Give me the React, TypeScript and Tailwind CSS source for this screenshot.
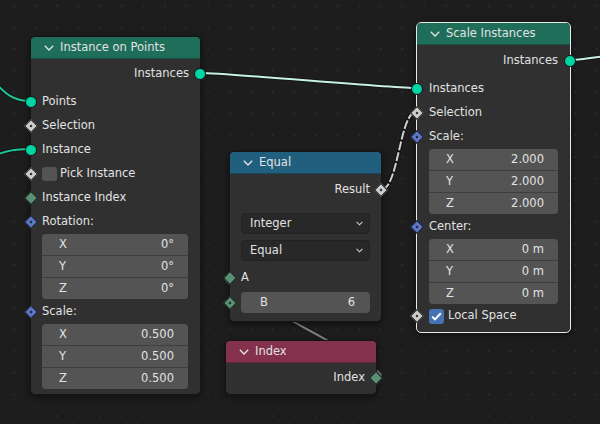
import type { ReactNode } from 'react'

type SocketKind = 'geo' | 'bool' | 'int' | 'intField' | 'vec'

function Socket({ kind, side }: { kind: SocketKind; side: 'left' | 'right' }) {
  const pos = side === 'left' ? '-left-[6px]' : '-right-[6px]'
  if (kind === 'geo') {
    return (
      <span
        className={`absolute ${pos} top-1/2 -translate-y-1/2 w-[12px] h-[12px] rounded-full bg-[#00d6a3] border border-[#141414]`}
      />
    )
  }
  const color =
    kind === 'bool' ? 'bg-[#cdcdcd]' : kind === 'vec' ? 'bg-[#5c77c8]' : 'bg-[#5a8f74]'
  const dot = kind === 'bool' || kind === 'vec' || kind === 'intField'
  return (
    <span
      className={`absolute ${pos} top-1/2 -translate-y-1/2 w-[12px] h-[12px] flex items-center justify-center`}
    >
      <span
        className={`shrink-0 w-[10px] h-[10px] rotate-45 ${color} border border-[#141414] flex items-center justify-center`}
      >
        {dot && <span className="w-[2.5px] h-[2.5px] bg-[#1e1e1e]" />}
      </span>
    </span>
  )
}

function Row({
  label,
  input,
  output,
  className = '',
  children,
}: {
  label?: string
  input?: SocketKind
  output?: SocketKind
  className?: string
  children?: ReactNode
}) {
  return (
    <div
      className={`relative h-[24px] flex items-center ${output ? 'justify-end' : ''} ${className}`}
    >
      {input && <Socket kind={input} side="left" />}
      {children}
      {label && <span>{label}</span>}
      {output && <Socket kind={output} side="right" />}
    </div>
  )
}

function Vec({ rows, className = '' }: { rows: [string, string][]; className?: string }) {
  return (
    <div className={`rounded-[4px] overflow-hidden flex flex-col gap-px bg-[#3e3e3e] ${className}`}>
      {rows.map(([k, v]) => (
        <div key={k} className="h-[21px] bg-[#545454] flex items-center justify-between pl-[17px] pr-[14px]">
          <span>{k}</span>
          <span>{v}</span>
        </div>
      ))}
    </div>
  )
}

function Chevron() {
  return (
    <svg width="10" height="6" viewBox="0 0 10 6" className="shrink-0">
      <polyline points="0.8,0.8 5,5 9.2,0.8" fill="none" stroke="#e6e6e6" strokeWidth="1.3" />
    </svg>
  )
}

function Header({ title, color }: { title: string; color: string }) {
  return (
    <div className={`h-[22px] ${color} rounded-t-[4px] flex items-center gap-[6px] pl-[13px] border-b border-[#00000040]`}>
      <Chevron />
      <span>{title}</span>
    </div>
  )
}

function Dropdown({ label, className = '' }: { label: string; className?: string }) {
  return (
    <div
      className={`mx-[11px] h-[21px] rounded-[4px] bg-[#282828] border border-[#232323] flex items-center justify-between pl-[8px] pr-[6px] ${className}`}
    >
      <span>{label}</span>
      <svg width="7" height="5" viewBox="0 0 7 5">
        <polyline points="0.6,0.8 3.5,3.8 6.4,0.8" fill="none" stroke="#d0d0d0" strokeWidth="1.1" />
      </svg>
    </div>
  )
}

function Wire({ d, color, dashed }: { d: string; color: string; dashed?: boolean }) {
  return (
    <g fill="none">
      <path d={d} stroke="#111111" strokeWidth="4" strokeOpacity="0.8" />
      <path d={d} stroke={color} strokeWidth="2" strokeDasharray={dashed ? '9 2' : undefined} />
    </g>
  )
}

export default function App() {
  return (
    <div className="relative w-[600px] h-[424px] overflow-hidden bg-[#1d1d1d] bg-[radial-gradient(circle,#2a2a2a_1px,transparent_1.3px)] bg-[size:21.6px_21.6px] bg-[position:3px_-5px] text-[11.5px] text-[#e2e2e2] font-['DejaVu_Sans',sans-serif] leading-none">
      {/* links, drawn under the nodes */}
      <svg className="absolute inset-0" width="600" height="424">
        <Wire d="M -40 68 C 0 68, -5 101, 30 101" color="#1ec59c" />
        <Wire d="M -40 160 C 0 160, -5 149, 30 149" color="#1ec59c" />
        <Wire d="M 377 377 C 412 377, 194 277, 229 277" color="#7c7c7c" />
        <Wire d="M 201 73 C 225 73, 392 88, 416 88" color="#c6f1e4" />
        <Wire d="M 571 60 C 585 60, 590 57, 610 56" color="#c6f1e4" />
        <Wire d="M 382 189 C 398 189, 400 112, 416 112" color="#cfcfcf" dashed />
      </svg>

      {/* Instance on Points */}
      <div className="absolute left-[30px] top-[36px] w-[171px] rounded-[5px] bg-[#303030] border border-[#151515] shadow-[0_2px_6px_#00000080]">
        <Header title="Instance on Points" color="bg-[#1f6e5a]" />
        <div className="pt-[3px] pb-[5px] px-[11px]">
          <Row label="Instances" output="geo" className="-mr-[11px] pr-[11px]" />
          <div className="mt-[4px]">
            <Row label="Points" input="geo" className="-ml-[11px] pl-[11px]" />
            <Row label="Selection" input="bool" className="-ml-[11px] pl-[11px]" />
            <Row label="Instance" input="geo" className="-ml-[11px] pl-[11px]" />
            <Row label="Pick Instance" input="bool" className="-ml-[11px] pl-[11px]">
              <span className="w-[15px] h-[14px] rounded-[3px] bg-[#545454] mr-[3px]" />
            </Row>
            <Row label="Instance Index" input="int" className="-ml-[11px] pl-[11px]" />
            <Row label="Rotation:" input="vec" className="-ml-[11px] pl-[11px]" />
          </div>
          <Vec rows={[['X', '0°'], ['Y', '0°'], ['Z', '0°']]} className="mr-px" />
          <Row label="Scale:" input="vec" className="-ml-[11px] pl-[11px] mt-[1px]" />
          <Vec rows={[['X', '0.500'], ['Y', '0.500'], ['Z', '0.500']]} className="mr-px" />
        </div>
      </div>

      {/* Equal */}
      <div className="absolute left-[229px] top-[151px] w-[153px] rounded-[5px] bg-[#303030] border border-[#151515] shadow-[0_2px_6px_#00000080]">
        <Header title="Equal" color="bg-[#205f7d]" />
        <div className="pt-[4px] pb-[8px]">
          <Row label="Result" output="bool" className="pr-[11px]" />
          <Dropdown label="Integer" className="mt-[11px]" />
          <Dropdown label="Equal" className="mt-[6px]" />
          <Row label="A" input="int" className="pl-[11px] mt-[5px]" />
          <div className="relative mt-[2px]">
            <Socket kind="intField" side="left" />
            <div className="mx-[11px] h-[21px] rounded-[4px] bg-[#545454] flex items-center justify-between pl-[19px] pr-[15px]">
              <span>B</span>
              <span>6</span>
            </div>
          </div>
        </div>
      </div>

      {/* Index */}
      <div className="absolute left-[225px] top-[340px] w-[152px] rounded-[5px] bg-[#303030] border border-[#151515] shadow-[0_2px_6px_#00000080]">
        <Header title="Index" color="bg-[#83314d]" />
        <div className="pt-[3px] pb-[4px]">
          <Row label="Index" output="int" className="pr-[11px]" />
        </div>
      </div>

      {/* Scale Instances (selected) */}
      <div className="absolute left-[416px] top-[22px] w-[155px] rounded-[5px] bg-[#303030] border border-[#e8e8e8] shadow-[0_2px_6px_#00000080]">
        <Header title="Scale Instances" color="bg-[#1f6e5a]" />
        <div className="pt-[4px] pb-[4px] px-[12px]">
          <Row label="Instances" output="geo" className="-mr-[12px] pr-[12px]" />
          <Row label="Instances" input="geo" className="-ml-[12px] pl-[12px] mt-[4px]" />
          <Row label="Selection" input="bool" className="-ml-[12px] pl-[12px]" />
          <Row label="Scale:" input="vec" className="-ml-[12px] pl-[12px]" />
          <Vec rows={[['X', '2.000'], ['Y', '2.000'], ['Z', '2.000']]} />
          <Row label="Center:" input="vec" className="-ml-[12px] pl-[12px] mt-[1px]" />
          <Vec rows={[['X', '0 m'], ['Y', '0 m'], ['Z', '0 m']]} />
          <Row label="Local Space" input="bool" className="-ml-[12px] pl-[12px]">
            <span className="w-[15px] h-[15px] rounded-[3px] bg-[#4772b3] mr-[4px] flex items-center justify-center">
              <svg width="11" height="9" viewBox="0 0 11 9">
                <polyline points="1.2,4.6 4,7.4 9.8,1.2" fill="none" stroke="#ffffff" strokeWidth="2" />
              </svg>
            </span>
          </Row>
        </div>
      </div>
    </div>
  )
}
